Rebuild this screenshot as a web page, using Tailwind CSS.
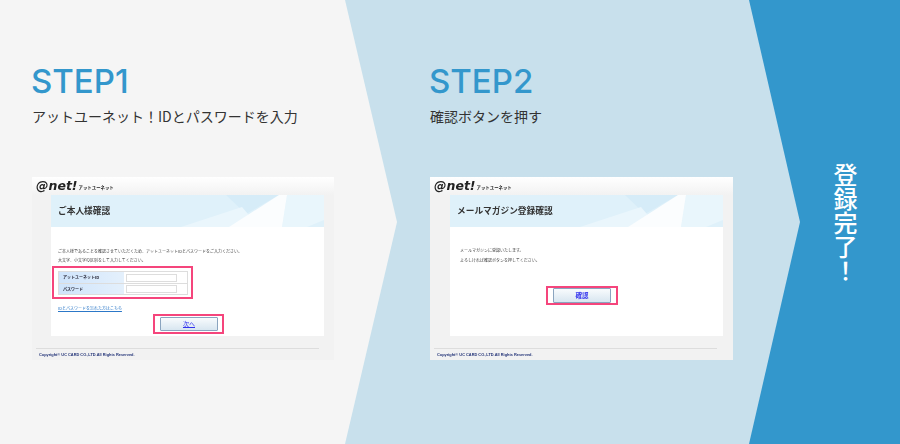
<!DOCTYPE html>
<html lang="ja">
<head>
  <meta charset="UTF-8">
  <title>登録の流れ</title>
  <script src="https://cdn.jsdelivr.net/npm/@tailwindcss/browser@4"></script>
</head>
<body class="m-0 overflow-hidden bg-[#3397cc] font-['Noto_Sans_CJK_JP',sans-serif]">
  <div class="flex h-[444px] w-[900px]">

    <!-- step 1 -->
    <section class="relative z-20 h-full w-[397px] shrink-0 bg-[#f5f5f5] pl-[32px] pt-[62px] [clip-path:polygon(0_0,345px_0,397px_222px,345px_444px,0_444px)]">
      <h2 class="-ml-[1px] font-['Inter',sans-serif] text-[33px] font-medium leading-[38px] text-[#3397cc]">STEP1</h2>
      <p class="mt-[6px] text-[14px] leading-[20px] text-[#333]">アットユーネット！IDとパスワードを入力</p>

      <div class="mt-[51px] h-[183px] w-[302px] bg-[#f2f2f2] blur-[0.3px]">
        <div class="flex h-[18px] items-center bg-gradient-to-b from-white to-[#f2f2f2] pl-[4px]">
          <span class="font-['DejaVu_Sans',sans-serif] text-[12.5px] font-bold italic leading-none text-[#222]">@net!</span>
          <span class="ml-[1px] mt-[3px] text-[4.4px] font-bold text-[#222]">アットユーネット</span>
        </div>
        <div class="ml-[19px] h-[141px] w-[273px] bg-white">
          <div class="relative flex h-[32px] items-center overflow-hidden bg-[#dff1fa] pl-[7px]">
            <svg class="absolute left-0 top-0" width="273" height="32" viewBox="0 0 273 32">
              <polygon points="175,0 195,19 228,0" fill="#d6ecf8"/>
              <polygon points="130,32 191,12 208,32" fill="#eaf6fc"/>
              <polygon points="236,0 273,0 273,25 256,32 231,32" fill="#e9f6fc"/>
              <polygon points="178,32 228,0 236,0 231,32" fill="#fbfdfe"/>
            </svg>
            <h3 class="relative text-[8.7px] font-bold text-[#333]">ご本人様確認</h3>
          </div>
          <div class="pl-[7px] pt-[20px] text-[4px] leading-[9px] text-[#444]">
            <p>ご本人様であることを確認させていただくため、アットユーネットIDとパスワードをご入力ください。</p>
            <p>大文字、小文字の区別をして入力してください。</p>
            <div class="-ml-[6px] mt-[1px] h-[33px] w-[141px] border-2 border-[#f5457c] py-[3px] pl-[4px]">
              <div class="w-[130px] border border-[#ddd] text-[4px] font-bold leading-[11px] text-[#223]">
                <div class="flex h-[11.5px] border-b border-[#ddd]">
                  <div class="w-[65px] bg-gradient-to-r from-[#cfe4fb] to-[#e4f0fc] pl-[4px]">アットユーネットID</div>
                  <div class="ml-[2px] mt-[2px] h-[7.5px] w-[51px] border border-[#ddd]"></div>
                </div>
                <div class="flex h-[10.5px]">
                  <div class="w-[65px] bg-gradient-to-r from-[#cfe4fb] to-[#e4f0fc] pl-[4px]">パスワード</div>
                  <div class="ml-[2px] mt-[1px] h-[8px] w-[51px] border border-[#ddd]"></div>
                </div>
              </div>
            </div>
            <a class="mt-[5px] block leading-[8px] text-[#2c78c8] underline">IDとパスワードを忘れた方はこちら</a>
            <div class="-ml-[7px] mt-[2px] pl-[102px]">
              <div class="h-[20px] w-[71px] border-2 border-[#f5457c] px-[5px] py-[1px]">
                <button class="h-[14px] w-[58px] rounded-[1px] border border-[#8aa4bf] bg-gradient-to-b from-[#f8fbfd] to-[#d8e6f0] text-[6px] leading-none text-[#3333ee] underline">次へ</button>
              </div>
            </div>
          </div>
        </div>
        <div class="ml-[4px] mt-[12px] w-[283px] border-t border-[#ddd] pl-[3px] pt-[3px] font-['Liberation_Sans',sans-serif] text-[3.9px] font-bold leading-[6px] text-[#223377]">Copyright© UC CARD CO.,LTD.All Rights Reserved.</div>
      </div>
    </section>

    <!-- step 2 -->
    <section class="relative z-10 -ml-[52px] h-full w-[455px] shrink-0 bg-[#c8e0ec] pl-[85px] pt-[62px] [clip-path:polygon(0_0,404px_0,455px_222px,404px_444px,0_444px)]">
      <h2 class="-ml-[1px] font-['Inter',sans-serif] text-[33px] font-medium leading-[38px] text-[#3397cc]">STEP2</h2>
      <p class="mt-[6px] text-[14px] leading-[20px] text-[#333]">確認ボタンを押す</p>

      <div class="mt-[51px] h-[183px] w-[303px] bg-[#f2f2f2] blur-[0.3px]">
        <div class="flex h-[18px] items-center bg-gradient-to-b from-white to-[#f2f2f2] pl-[4px]">
          <span class="font-['DejaVu_Sans',sans-serif] text-[12.5px] font-bold italic leading-none text-[#222]">@net!</span>
          <span class="ml-[1px] mt-[3px] text-[4.4px] font-bold text-[#222]">アットユーネット</span>
        </div>
        <div class="ml-[20px] h-[141px] w-[273px] bg-white">
          <div class="relative flex h-[32px] items-center overflow-hidden bg-[#dff1fa] pl-[7px]">
            <svg class="absolute left-0 top-0" width="273" height="32" viewBox="0 0 273 32">
              <polygon points="175,0 195,19 228,0" fill="#d6ecf8"/>
              <polygon points="130,32 191,12 208,32" fill="#eaf6fc"/>
              <polygon points="236,0 273,0 273,25 256,32 231,32" fill="#e9f6fc"/>
              <polygon points="178,32 228,0 236,0 231,32" fill="#fbfdfe"/>
            </svg>
            <h3 class="relative text-[8.7px] font-bold text-[#333]">メールマガジン登録確認</h3>
          </div>
          <div class="pl-[10px] pt-[18px] text-[4px] leading-[10px] text-[#444]">
            <p>メールマガジンに登録いたします。</p>
            <p>よろしければ確認ボタンを押してください。</p>
            <div class="-ml-[10px] mt-[21px] pl-[96px]">
              <div class="h-[19px] w-[72px] border-2 border-[#f5457c] px-[5px] py-0">
                <button class="h-[15px] w-[58px] rounded-[1px] border border-[#8aa4bf] bg-gradient-to-b from-[#f8fbfd] to-[#d8e6f0] text-[6.5px] font-bold leading-none text-[#3333ee]">確認</button>
              </div>
            </div>
          </div>
        </div>
        <div class="ml-[4px] mt-[12px] w-[283px] border-t border-[#ddd] pl-[3px] pt-[3px] font-['Liberation_Sans',sans-serif] text-[3.9px] font-bold leading-[6px] text-[#223377]">Copyright© UC CARD CO.,LTD.All Rights Reserved.</div>
      </div>
    </section>

    <!-- done -->
    <section class="-ml-[51px] flex h-full flex-1 justify-center pl-[41px] pt-[163px]">
      <p class="text-[24px] font-medium leading-none text-white [writing-mode:vertical-rl]">登録完了！</p>
    </section>
  </div>
</body>
</html>
